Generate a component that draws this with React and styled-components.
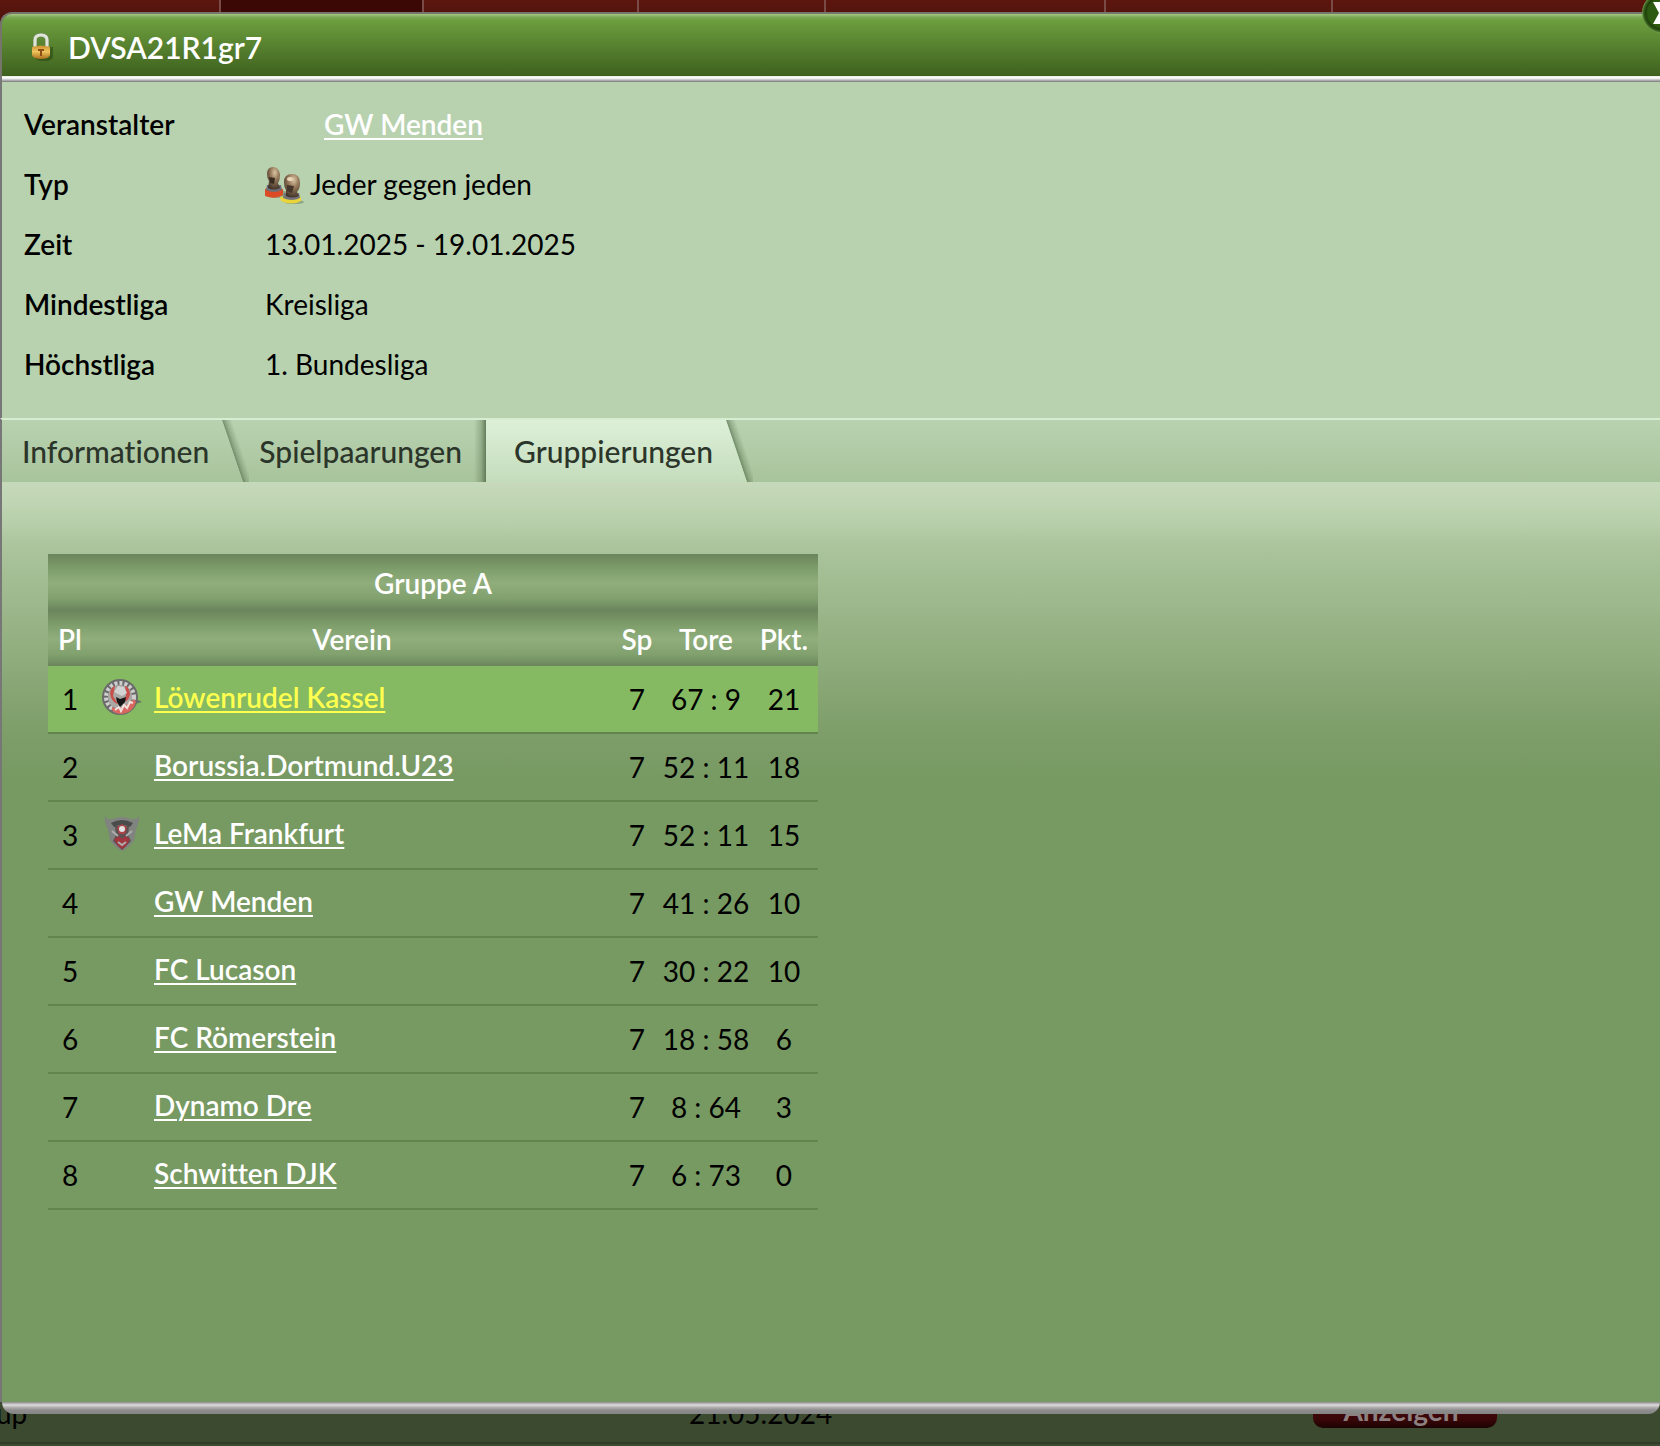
import React from 'react';
import styled, { createGlobalStyle } from 'styled-components';

const infoRows = [
  { label: 'Veranstalter', value: 'GW Menden', link: true },
  { label: 'Typ', value: 'Jeder gegen jeden', icon: true },
  { label: 'Zeit', value: '13.01.2025 - 19.01.2025' },
  { label: 'Mindestliga', value: 'Kreisliga' },
  { label: 'Höchstliga', value: '1. Bundesliga' },
];

const clubs = [
  { name: 'Löwenrudel Kassel', crest: 'round', games: 7, goals: '67 : 9', points: 21, own: true },
  { name: 'Borussia.Dortmund.U23', games: 7, goals: '52 : 11', points: 18 },
  { name: 'LeMa Frankfurt', crest: 'shield', games: 7, goals: '52 : 11', points: 15 },
  { name: 'GW Menden', games: 7, goals: '41 : 26', points: 10 },
  { name: 'FC Lucason', games: 7, goals: '30 : 22', points: 10 },
  { name: 'FC Römerstein', games: 7, goals: '18 : 58', points: 6 },
  { name: 'Dynamo Dre', games: 7, goals: '8 : 64', points: 3 },
  { name: 'Schwitten DJK', games: 7, goals: '6 : 73', points: 0 },
];

const LockIcon = () => (
  <svg width="24" height="30" viewBox="0 0 24 30" aria-hidden="true">
    <defs>
      <linearGradient id="brass" x1="0" y1="0" x2="0" y2="1">
        <stop offset="0" stopColor="#c98f2c" />
        <stop offset="0.45" stopColor="#f0c45c" />
        <stop offset="1" stopColor="#a8701c" />
      </linearGradient>
    </defs>
    <path d="M4 15h19v9c0 3-3 5-9 5S5 27 4 24z" fill="#1f3a0c" opacity="0.45" />
    <path d="M5 15V8c0-3 2-5 6-5s6 2 6 5v7" fill="none" stroke="#7f8f74" strokeWidth="4" />
    <path d="M5 15V8c0-3 2-5 6-5s6 2 6 5v7" fill="none" stroke="#dfe6d8" strokeWidth="3" />
    <path d="M2 15q9-3 18 0v8q-1 4-9 4t-9-4z" fill="url(#brass)" />
    <path d="M8 17h6v2h-2v5h-2v-5H8z" fill="#8d4d17" />
  </svg>
);

const PawnsIcon = () => (
  <svg width="39" height="40" viewBox="0 0 39 40" aria-hidden="true">
    <defs>
      <radialGradient id="pawn" cx="0.6" cy="0.25" r="0.8">
        <stop offset="0" stopColor="#d8c4a2" />
        <stop offset="0.4" stopColor="#96795a" />
        <stop offset="1" stopColor="#3c2f26" />
      </radialGradient>
    </defs>
    <ellipse cx="12" cy="30" rx="12" ry="4" fill="#8fa586" />
    <path d="M0 25q8-3 18 0v6q-8 5-18 1z" fill="#dc4b26" />
    <path d="M2 21h14l1 5q-8 4-16 0z" fill="#706d75" />
    <path d="M2 10q0-7 6-7t7 8q0 5-2 8l2 5q-6 3-12 0l1-7Q2 14 2 10z" fill="url(#pawn)" />
    <path d="M4 13l6 1-1 6-4-1z" fill="#3b2c22" />
    <ellipse cx="29" cy="38" rx="10" ry="2" fill="#8fa586" />
    <path d="M15 33q10-3 21 0v4q-9 5-20 0z" fill="#e9d43a" />
    <path d="M19 29h15l1 5q-8 4-17 0z" fill="#73737a" />
    <path d="M19 18q0-8 8-8t8 9q0 6-3 9l2 4q-7 3-13 0v-6q-2-3-2-8z" fill="url(#pawn)" />
    <path d="M22 21l7 1-2 7-5-2z" fill="#46352a" />
    <ellipse cx="25" cy="15" rx="3" ry="2" fill="#e8d6b8" />
  </svg>
);

const RoundCrest = () => (
  <svg width="42" height="38" viewBox="0 0 42 38" aria-hidden="true">
    <path d="M33 20l8 4-7 2z" fill="#66706a" />
    <circle cx="19" cy="19" r="18" fill="#6b6b6b" />
    <circle cx="19" cy="19" r="14" fill="none" stroke="#cfcfcf" strokeWidth="4" strokeDasharray="3 2" />
    <circle cx="19" cy="19" r="12" fill="#aaa7a5" />
    <path d="M9 15q1-6 5-7l-2 10 5 8q-7-2-8-11z" fill="#c9504a" />
    <path d="M29 15q-1-6-5-7l1 9-2 7q6-2 6-9z" fill="#c9504a" />
    <path d="M11 29q8 5 22-8l2 3q-3 11-15 12-6 0-9-4z" fill="#d9665f" />
    <path d="M14 32l4-3 2 4 3-6 3 3 3-6 3 1" fill="none" stroke="#f1e2de" strokeWidth="2" />
    <path d="M13 14l4-6 6 1 3 6-5 3z" fill="#d2d2d2" />
    <path d="M15 19l4 2 6-2-1 5-5 5-3-5z" fill="#171717" />
  </svg>
);

const ShieldCrest = () => (
  <svg width="42" height="38" viewBox="0 0 42 38" aria-hidden="true">
    <path d="M4 2q2 4 8 3 9-4 18 0 6 1 8-3 0 8-3 13l-2 11q-4 7-12 11-8-4-12-11L7 15Q3 9 4 2z" fill="#80837f" />
    <path d="M10 9q11-6 22 0l-3 4q-8-4-16 0z" fill="#4a4c4c" />
    <path d="M14 12h14l-1 9 3 6-9 9-9-9 3-6z" fill="#5c5053" />
    <path d="M16 13l5-3 5 3-2 7h-6z" fill="#a94448" />
    <circle cx="21" cy="15" r="3" fill="#e2e2e2" />
    <path d="M13 25l5-3 3 3 3-3 5 3-4 7-4 3-4-3z" fill="#a0363e" />
    <path d="M11 17l6 5M31 17l-6 5M17 28l4 3 4-3" fill="none" stroke="#adadad" strokeWidth="2" />
  </svg>
);

const SlantEdge = ({ id, active }) => (
  <svg width="28" height="62" viewBox="0 0 28 62" aria-hidden="true">
    <defs>
      <linearGradient id={`${id}Fill`} x1="0" y1="0" x2="0" y2="1">
        <stop offset="0" stopColor={active ? '#dcf0d8' : '#b8d2b0'} />
        <stop offset="1" stopColor={active ? '#c5dcbc' : '#a8c49c'} />
      </linearGradient>
      <linearGradient id={`${id}Shade`} gradientUnits="userSpaceOnUse" x1="11" y1="31" x2="20" y2="28">
        <stop offset="0" stopColor="#48603f" stopOpacity="0.65" />
        <stop offset="0.4" stopColor="#48603f" stopOpacity="0.3" />
        <stop offset="1" stopColor="#48603f" stopOpacity="0" />
      </linearGradient>
    </defs>
    <path d="M1 0h11L28 46v16h-6z" fill={`url(#${id}Shade)`} />
    <path d="M0 0h1l21 62H0z" fill={`url(#${id}Fill)`} />
  </svg>
);

const App = () => {
  return (
    <Page>
      <GlobalStyle />
      <NavBar>
        <NavItem />
        <NavItem $active />
        <NavItem />
        <NavItem />
        <NavItem />
        <NavItem />
        <NavItem />
      </NavBar>

      <Dialog role="dialog" aria-labelledby="cup-title">
        <CloseButton type="button" aria-label="Schließen">
          <svg width="40" height="40" viewBox="0 0 40 40" aria-hidden="true">
            <path d="M11 9h7l3 6 3-6h6l-6 11 6 11h-6l-3-6-3 6h-7l6-11z" fill="#fff" />
          </svg>
        </CloseButton>
        <TitleBar>
          <LockIcon />
          <Title id="cup-title">DVSA21R1gr7</Title>
        </TitleBar>

        <Info>
          {infoRows.map((row) => (
            <InfoRow key={row.label}>
              <InfoLabel>{row.label}</InfoLabel>
              <InfoValue $indent={row.link}>
                {row.icon && <PawnsIcon />}
                {row.link ? <ClubLink href="#menden">{row.value}</ClubLink> : row.value}
              </InfoValue>
            </InfoRow>
          ))}
        </Info>

        <TabBar role="tablist">
          <Tab type="button" role="tab" aria-selected="false">Informationen</Tab>
          <SlantEdge id="info" />
          <Tab type="button" role="tab" aria-selected="false">Spielpaarungen</Tab>
          <StraightEdge />
          <Tab type="button" role="tab" aria-selected="true" $active>Gruppierungen</Tab>
          <SlantEdge id="group" active />
        </TabBar>

        <Panel role="tabpanel">
          <Table>
            <colgroup>
              <Col $width={44} />
              <Col $width={50} />
              <col />
              <Col $width={50} />
              <Col $width={88} />
              <Col $width={68} />
            </colgroup>
            <thead>
              <tr>
                <HeadCell colSpan={6}>Gruppe A</HeadCell>
              </tr>
              <tr>
                <HeadCell>Pl</HeadCell>
                <HeadCell colSpan={2}>Verein</HeadCell>
                <HeadCell>Sp</HeadCell>
                <HeadCell>Tore</HeadCell>
                <HeadCell>Pkt.</HeadCell>
              </tr>
            </thead>
            <tbody>
              {clubs.map((club, i) => (
                <ClubRow key={club.name} $own={club.own}>
                  <Cell>{i + 1}</Cell>
                  <CrestCell>
                    {club.crest === 'round' && <RoundCrest />}
                    {club.crest === 'shield' && <ShieldCrest />}
                  </CrestCell>
                  <NameCell>
                    <ClubLink href={`#club-${i + 1}`} $own={club.own}>{club.name}</ClubLink>
                  </NameCell>
                  <Cell>{club.games}</Cell>
                  <Cell>{club.goals}</Cell>
                  <Cell>{club.points}</Cell>
                </ClubRow>
              ))}
            </tbody>
          </Table>
        </Panel>
        <BottomEdge />
      </Dialog>

      <BackRow>
        <CupName>up</CupName>
        <span>21.05.2024</span>
        <ShowButton type="button">Anzeigen</ShowButton>
      </BackRow>
    </Page>
  );
};

const GlobalStyle = createGlobalStyle`
  *{
    box-sizing:border-box;
  }
  body{
    margin:0;
    background-color:#3c4b30;
    font-family:Lato, "Liberation Sans", sans-serif;
    font-size:28px;
    font-variant-ligatures:none;
    line-height:34px;
    color:#000;
  }
  button{
    font-family:inherit;
    font-variant-ligatures:inherit;
  }
  svg{
    display:block;
    flex:none;
  }
`

const Page = styled.div`
  min-height:100vh;
  overflow:hidden;
`

const NavBar = styled.div`
  display:grid;
  grid-template-columns:221px 203px 215px 187px 280px 227px 1fr;
  height:30px;
  background:linear-gradient(#5c160e, #48120c);
`

const NavItem = styled.div`
  border-right:2px solid #7a4a46;
  background-color:${({ $active }) => ($active ? '#3c0806' : 'transparent')};
  &:last-child{
    border-right:none;
  }
`

const Dialog = styled.section`
  position:relative;
  z-index:1;
  margin-top:-18px;
`

const CloseButton = styled.button`
  position:absolute;
  top:-19px;
  right:-22px;
  width:40px;
  height:40px;
  padding:0;
  border:none;
  border-radius:50%;
  background:radial-gradient(circle, #2c5a10 50%, #1f3f0c 58%, #3f6a22 66%, #6d9a4c 70%);
`

const TitleBar = styled.header`
  display:flex;
  align-items:center;
  gap:14px;
  height:64px;
  padding:4px 28px 0;
  border:2px solid #75756c;
  border-right:none;
  border-bottom:none;
  border-top-left-radius:12px;
  background:linear-gradient(#a9c884 0, #7da957 3px, #6c9e3e 6px, #3e601e 100%);
`

const Title = styled.h1`
  margin:0;
  font-size:30px;
  font-weight:600;
  line-height:36px;
  color:#fff;
`

const Info = styled.dl`
  margin:0;
  padding:18px 22px 24px;
  border-left:2px solid #777;
  background:linear-gradient(#e9e9e0 0, #fff 2px, #bbb 4px, #777 6px, #b8d2af 6px);
`

const InfoRow = styled.div`
  display:flex;
  align-items:center;
  height:60px;
`

const InfoLabel = styled.dt`
  width:241px;
  font-weight:600;
`

const InfoValue = styled.dd`
  display:flex;
  align-items:center;
  gap:6px;
  margin:0;
  padding-left:${({ $indent }) => ($indent ? '59px' : '0')};
`

const ClubLink = styled.a`
  color:${({ $own }) => ($own ? '#ffff50' : '#fff')};
  font-weight:600;
  text-decoration:underline;
  text-decoration-thickness:2px;
  text-underline-offset:3px;
`

const TabBar = styled.div`
  display:flex;
  height:64px;
  border-top:2px solid #d8ecd2;
  border-left:2px solid #777;
  background:linear-gradient(#b8d2b0, #a8c49c);
`

const Tab = styled.button`
  padding:${({ $active }) => ($active ? '0 12px 0 28px' : '0 12px 0 20px')};
  border:none;
  background:${({ $active }) => ($active ? 'linear-gradient(#dcf0d8, #c5dcbc)' : 'transparent')};
  font-size:30px;
  font-weight:500;
  line-height:36px;
  color:#2c352a;
  & + svg + &{
    padding-left:10px;
  }
`

const StraightEdge = styled.div`
  width:12px;
  background:linear-gradient(to right, rgba(72,96,63,0), rgba(72,96,63,0.3) 60%, rgba(72,96,63,0.75));
`

const Panel = styled.div`
  min-height:920px;
  padding:72px 46px 60px;
  border-left:2px solid #777;
  background:linear-gradient(#c6dabb 0, #b9d0ac 38px, #abc49c 65px, #7f9f6b 240px, #779962 300px);
`

const Table = styled.table`
  width:770px;
  max-width:100%;
  table-layout:fixed;
  border-collapse:separate;
  border-spacing:0;
  text-align:center;
`

const Col = styled.col`
  width:${({ $width }) => $width}px;
`

const HeadCell = styled.th`
  height:56px;
  padding:2px 0 0;
  background:linear-gradient(#6b855c, #80a06d 30%, #90ae7c 52%, #80a06d 80%, #6b855c);
  font-weight:600;
  color:#fff;
`

const ClubRow = styled.tr`
  background-color:${({ $own }) => ($own ? '#85ba62' : 'transparent')};
`

const Cell = styled.td`
  height:68px;
  padding:0;
  border-bottom:2px solid #64844f;
`

const CrestCell = styled(Cell)`
  padding:0 0 4px 9px;
`

const NameCell = styled(Cell)`
  padding:0 0 4px 12px;
  text-align:left;
`

const BottomEdge = styled.div`
  height:12px;
  margin-left:2px;
  border-radius:0 0 14px 14px;
  background:linear-gradient(#8d8a8c, #dedcde 3px, #b5b3b4 5px, #8f8d8e 8px, #858585);
`

const BackRow = styled.div`
  display:grid;
  grid-template-columns:689px 624px 184px;
  align-items:center;
  height:60px;
  margin-top:-30px;
  padding-bottom:2px;
  border-bottom:2px solid #303d26;
`

const CupName = styled.span`
  margin-left:-4px;
`

const ShowButton = styled.button`
  height:44px;
  margin-bottom:14px;
  padding:8px 8px 0 0;
  border:none;
  border-radius:10px;
  background:linear-gradient(#5a1212, #3a0608 80%, #1c0303);
  font-size:28px;
  font-weight:700;
  color:#8d8080;
`

export default App;
